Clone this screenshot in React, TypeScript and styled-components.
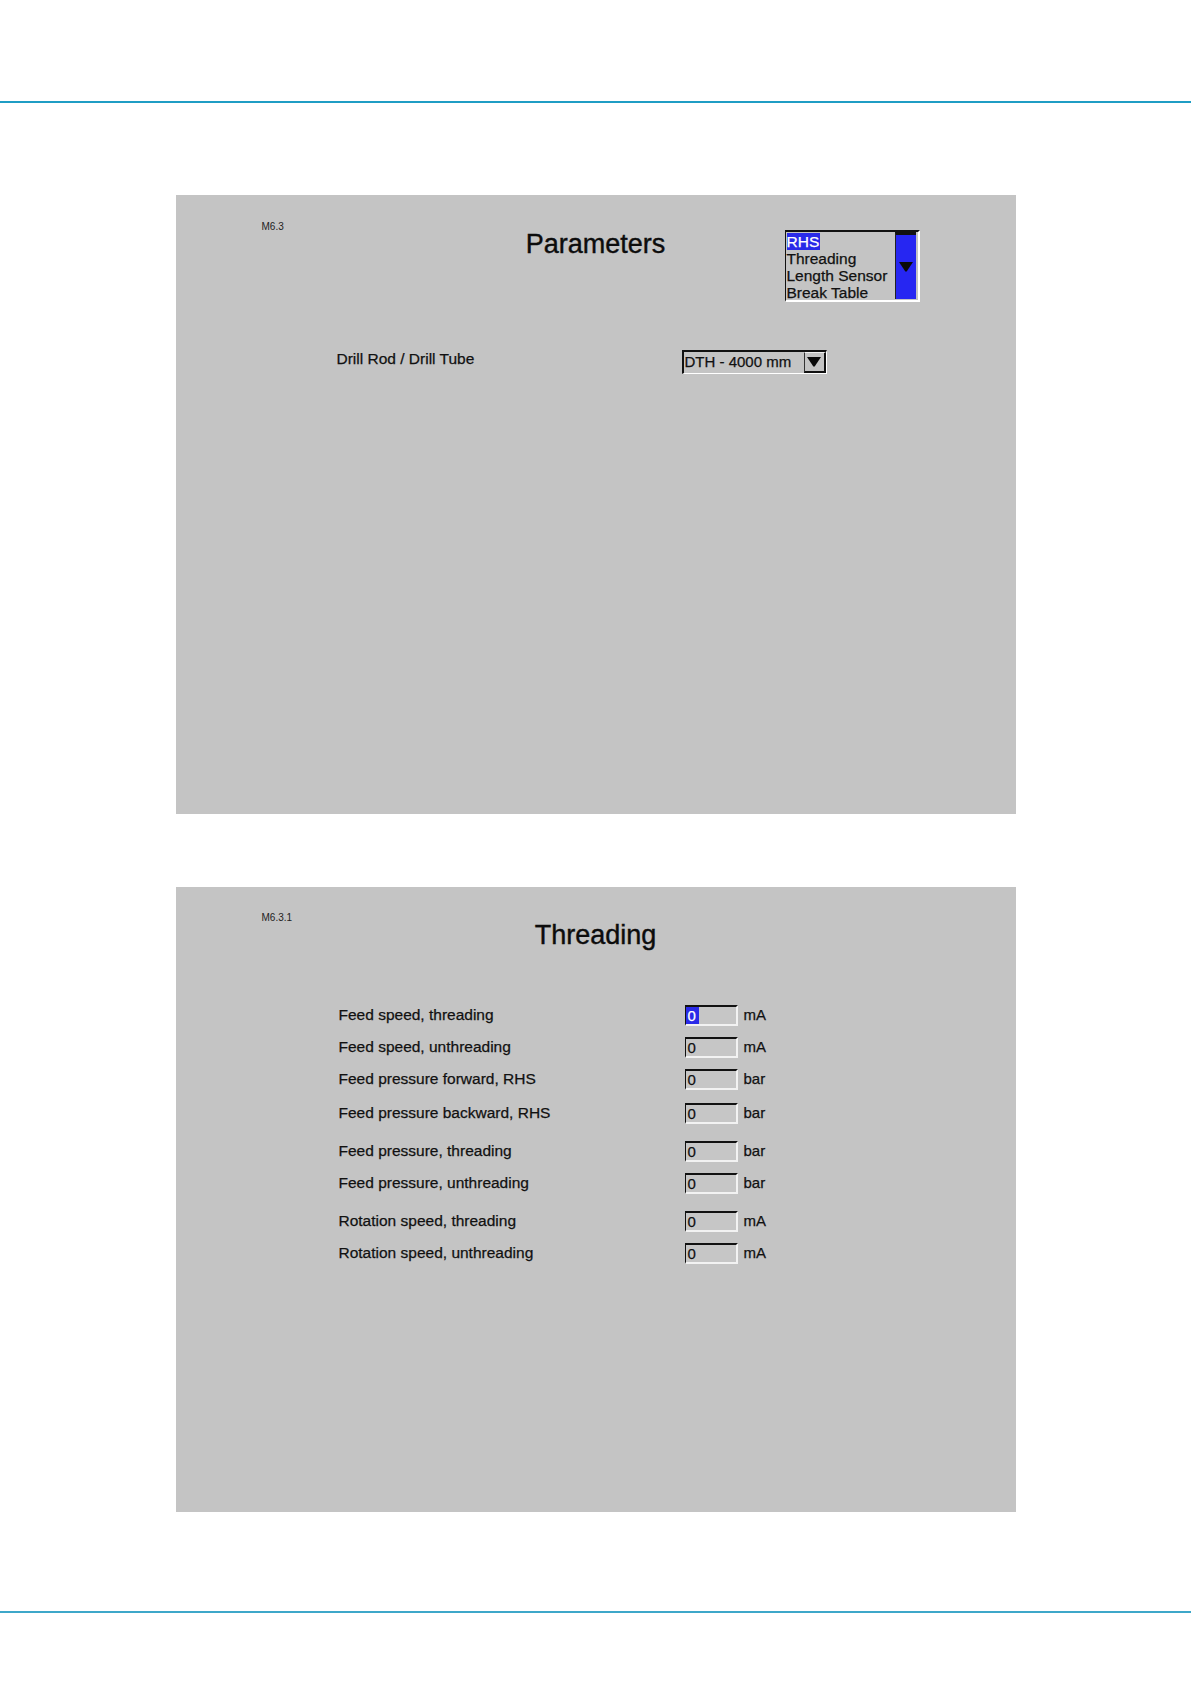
import React from "react";
import styled, { createGlobalStyle } from "styled-components";

const GlobalStyle = createGlobalStyle`
  html, body {
    margin: 0;
    padding: 0;
    background: #ffffff;
  }
  body {
    font-family: "Liberation Sans", Arial, sans-serif;
    color: #111111;
    -webkit-text-stroke: 0.25px currentColor;
  }
`;

const Page = styled.div`
  width: 1191px;
  min-height: 1684px;
  display: flex;
  flex-direction: column;
  align-items: center;
  background: #ffffff;
`;

const TopBand = styled.header`
  align-self: stretch;
  height: 101px;
  border-bottom: 2px solid #1f9dc4;
`;

const BottomRule = styled.footer`
  align-self: stretch;
  margin-top: 99px;
  height: 0;
  border-top: 2px solid #3ea7c9;
`;

const Screen = styled.section<{ $height: number; $top: number; $pad: number }>`
  width: 840px;
  height: ${(p) => p.$height}px;
  margin-top: ${(p) => p.$top}px;
  padding-top: ${(p) => p.$pad}px;
  box-sizing: border-box;
  background: #c4c4c4;
  display: flex;
  flex-direction: column;
`;

const Header = styled.div`
  display: grid;
  grid-template-columns: 300px 240px 300px;
  align-items: start;
`;

const ScreenId = styled.div`
  padding-left: 86px;
  font-size: 10px;
  line-height: 12px;
  color: #222222;
  -webkit-text-stroke: 0;
`;

const Title = styled.h1`
  margin: 8px 0 0;
  font-size: 27px;
  line-height: 31px;
  font-weight: normal;
  text-align: center;
  color: #0c0c0c;
  -webkit-text-stroke: 0.4px #0c0c0c;
`;

const ListBox = styled.div`
  margin: 9px 0 0 69px;
  width: 135px;
  height: 72px;
  box-sizing: border-box;
  border-top: 2px solid #111111;
  border-left: 1px solid #111111;
  border-right: 2px solid #ffffff;
  border-bottom: 2px solid #ffffff;
  display: flex;
`;

const ListItems = styled.div`
  flex: 1;
  padding: 1px 0 0 1px;
  font-size: 15.5px;
  line-height: 17px;
  white-space: nowrap;
  overflow: hidden;
`;

const ListItem = styled.div``;

const Selected = styled.span`
  background: #2a2ae8;
  color: #ffffff;
  padding: 0 1px 0 0;
`;

const ScrollTrack = styled.div`
  width: 20px;
  margin: 0 2px 1px 0;
  background: #2626f2;
  border-top: 3px solid #111111;
  border-left: 1px solid #222222;
  display: flex;
  align-items: center;
  justify-content: center;
`;

const ParamRow = styled.div`
  margin-top: 48px;
  padding-left: 161px;
  display: grid;
  grid-template-columns: 345px auto;
  align-items: start;
  height: 25px;
`;

const Label = styled.div`
  font-size: 15.5px;
  line-height: 18px;
  white-space: nowrap;
`;

const ComboBox = styled.div`
  width: 145px;
  height: 24px;
  box-sizing: border-box;
  border-top: 2px solid #111111;
  border-left: 2px solid #111111;
  border-right: 1px solid #ffffff;
  border-bottom: 1px solid #ffffff;
  display: flex;
`;

const ComboText = styled.div`
  flex: 1;
  padding-left: 1px;
  font-size: 15px;
  line-height: 19px;
  white-space: nowrap;
`;

const ComboButton = styled.div`
  width: 22px;
  box-sizing: border-box;
  border-top: 1px solid #f0f0f0;
  border-left: 1px solid #333333;
  border-right: 2px solid #111111;
  border-bottom: 2px solid #111111;
  display: flex;
  align-items: center;
  justify-content: center;
`;

const FieldList = styled.div`
  margin-top: 48px;
  padding-left: 163px;
  display: flex;
  flex-direction: column;
`;

const FieldRow = styled.div<{ $extra: number }>`
  margin-top: ${(p) => p.$extra}px;
  height: 32px;
  display: grid;
  grid-template-columns: 346px 53px auto;
  align-items: center;
`;

const ValueBox = styled.div`
  width: 53px;
  height: 21px;
  box-sizing: border-box;
  border-top: 2px solid #111111;
  border-left: 1px solid #111111;
  border-right: 2px solid #f2f2f2;
  border-bottom: 2px solid #f2f2f2;
  background: #c6c6c6;
  font-size: 15px;
  line-height: 17px;
  display: flex;
`;

const Value = styled.span<{ $active?: boolean }>`
  padding: 0 3px 0 2px;
  background: ${(p) => (p.$active ? "#2a2ae8" : "transparent")};
  color: ${(p) => (p.$active ? "#ffffff" : "#111111")};
`;

const Unit = styled.div`
  margin-left: 6px;
  font-size: 15px;
  line-height: 18px;
`;

const DownArrow = ({ w, h }: { w: number; h: number }) => (
  <svg width={w} height={h} viewBox="0 0 14 10">
    <path d="M0 0 H14 L8 9 Q7 10.5 6 9 Z" fill="#0a0a0a" />
  </svg>
);

const fields = [
  { label: "Feed speed, threading", unit: "mA", extra: 0 },
  { label: "Feed speed, unthreading", unit: "mA", extra: 0 },
  { label: "Feed pressure forward, RHS", unit: "bar", extra: 0 },
  { label: "Feed pressure backward, RHS", unit: "bar", extra: 2 },
  { label: "Feed pressure, threading", unit: "bar", extra: 6 },
  { label: "Feed pressure, unthreading", unit: "bar", extra: 0 },
  { label: "Rotation speed, threading", unit: "mA", extra: 6 },
  { label: "Rotation speed, unthreading", unit: "mA", extra: 0 },
];

const App = () => {
  return (
    <Page>
      <GlobalStyle />
      <TopBand />

      <Screen $height={619} $top={92} $pad={26}>
        <Header>
          <ScreenId>M6.3</ScreenId>
          <Title>Parameters</Title>
          <ListBox>
            <ListItems>
              <ListItem>
                <Selected>RHS</Selected>
              </ListItem>
              <ListItem>Threading</ListItem>
              <ListItem>Length Sensor</ListItem>
              <ListItem>Break Table</ListItem>
            </ListItems>
            <ScrollTrack>
              <DownArrow w={14} h={10} />
            </ScrollTrack>
          </ListBox>
        </Header>

        <ParamRow>
          <Label>Drill Rod / Drill Tube</Label>
          <ComboBox>
            <ComboText>DTH - 4000 mm</ComboText>
            <ComboButton>
              <DownArrow w={14} h={10} />
            </ComboButton>
          </ComboBox>
        </ParamRow>
      </Screen>

      <Screen $height={625} $top={73} $pad={25}>
        <Header>
          <ScreenId>M6.3.1</ScreenId>
          <Title>Threading</Title>
        </Header>

        <FieldList>
          {fields.map((f, i) => (
            <FieldRow key={f.label} $extra={f.extra}>
              <Label>{f.label}</Label>
              <ValueBox>
                <Value $active={i === 0}>0</Value>
              </ValueBox>
              <Unit>{f.unit}</Unit>
            </FieldRow>
          ))}
        </FieldList>
      </Screen>

      <BottomRule />
    </Page>
  );
};

export default App;
